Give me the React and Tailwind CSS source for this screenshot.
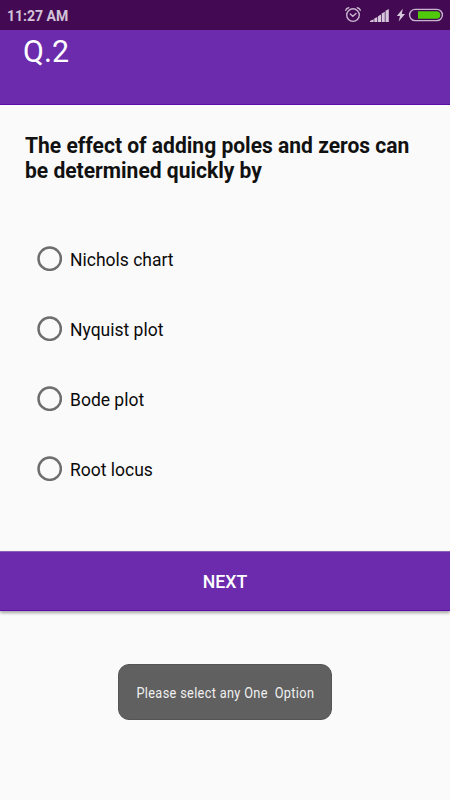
import { useState } from 'react';

const options = ['Nichols chart', 'Nyquist plot', 'Bode plot', 'Root locus'];

const StatusIcons = () => (
  <svg width="104" height="30" viewBox="0 0 104 30" fill="none">
    {/* alarm */}
    <g stroke="#c9b5cf" strokeWidth="1.4" strokeLinecap="round">
      <circle cx="13" cy="15.1" r="6.3" />
      <path d="M10.3 13.9 L12.8 16.3 L16 13.4" />
      <path d="M5.7 10.3 Q6.4 8.2 8.7 7.7" />
      <path d="M17.3 7.7 Q19.6 8.2 20.3 10.3" />
    </g>
    {/* signal */}
    <g fill="#d6c8da">
      <path d="M30 22 V20.9 L33.6 19.2 V22 Z" />
      <path d="M34.3 22 V18.6 L37.3 17 V22 Z" />
      <path d="M38 22 V16.2 L41 14.6 V22 Z" />
      <path d="M41.7 22 V13.6 L44.8 11.8 V22 Z" />
      <path d="M45.5 22 V10.8 L48.8 9 V22 Z" />
    </g>
    {/* charging */}
    <path d="M62.8 8.8 L56.8 15.9 H60 L58.7 21.6 L65 14 H61.8 Z" fill="#d6c8da" />
    {/* battery */}
    <rect x="69.6" y="9.4" width="32.8" height="11.2" rx="5.6" stroke="#c9b5cf" strokeWidth="1.4" />
    <path d="M78 11.2 H96.5 A3.8 3.8 0 0 1 96.5 18.8 H78 Z" fill="#4fc90a" />
  </svg>
);

const Radio = ({ checked }) => (
  <svg width="25" height="25" viewBox="0 0 25 25" fill="none" className="relative -top-px">
    <circle cx="12.7" cy="12.7" r="11.2" stroke="#6e6e6e" strokeWidth="2.5" />
    {checked && <circle cx="12.7" cy="12.7" r="6" fill="#6c2bad" />}
  </svg>
);

const App = () => {
  const [selected, setSelected] = useState(null);

  return (
    <div className="flex h-[800px] w-[450px] flex-col overflow-hidden bg-[#fafafa] font-['Roboto',sans-serif]">
      <div className="flex h-[30px] shrink-0 items-center justify-between bg-[#430a53] pl-[7px] pr-[6px]">
        <span className="pt-[2px] text-[14px] leading-5 font-bold text-[#d3c3d8]">11:27 AM</span>
        <StatusIcons />
      </div>

      <header className="h-[75px] shrink-0 border-b border-[#5a0fa8] bg-[#6c2bad] pl-[22.5px] pt-[3px]">
        <h1 className="origin-left scale-x-[0.98] text-[31px] leading-[38px] font-normal text-white">Q.2</h1>
      </header>

      <main className="flex h-[446px] shrink-0 flex-col pl-[25px] pt-7">
        <h2 className="w-[410px] origin-left scale-x-[0.965] text-[21.8px] leading-[25px] font-bold text-[#111]">
          The effect of adding poles and zeros can<br />be determined quickly by
        </h2>
        <div className="mt-[41px] pl-3">
          {options.map((option) => (
            <button
              key={option}
              onClick={() => setSelected(option)}
              className="flex h-[70px] w-full items-center"
            >
              <Radio checked={selected === option} />
              <span className="pl-2 pt-[2px] text-[17.5px] leading-6 text-[#0a0a0a]">{option}</span>
            </button>
          ))}
        </div>
      </main>

      <button className="h-[60px] w-full shrink-0 border-t border-b border-t-[#8a62b4] border-b-[#5a0fa8] bg-[#6c2bad] pt-[2px] text-[17.7px] font-medium text-white shadow-[0_2px_3px_rgba(0,0,0,0.35)]">
        NEXT
      </button>

      <div className="mt-[53px] flex h-14 w-[214px] shrink-0 items-center justify-center self-center rounded-[11px] border border-[#555] bg-[#606060] pt-px">
        <span className="scale-x-[0.86] whitespace-pre text-[14.8px] leading-5 tracking-[0.4px] text-[#f0f0f0]">
          {'Please select any One  Option'}
        </span>
      </div>
    </div>
  );
};

export default App;
